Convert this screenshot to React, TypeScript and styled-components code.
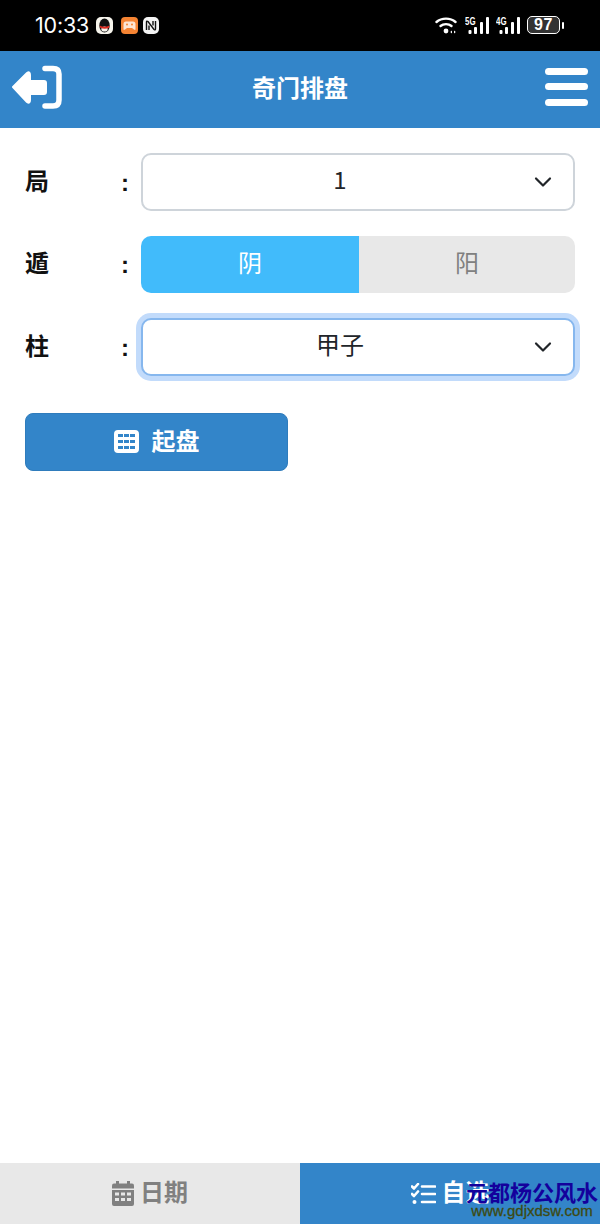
import React from "react"
import styled, { createGlobalStyle } from "styled-components"

const CJK = `"Noto Sans CJK SC", "Noto Sans", sans-serif`

const Global = createGlobalStyle`
    html, body {
        margin: 0;
        padding: 0;
        background: #fff;
    }
    * {
        box-sizing: border-box;
    }
`

const Page = styled.div`
    width: 600px;
    height: 1224px;
    display: flex;
    flex-direction: column;
    position: relative;
    overflow: hidden;
    font-family: ${CJK};
    background: #fff;
`

const StatusBar = styled.div`
    height: 51px;
    flex: none;
    background: #000;
    color: #fff;
    display: flex;
    align-items: center;
    justify-content: space-between;
    padding: 0 36px 1px 35px;
`

const StatusLeft = styled.div`
    display: flex;
    align-items: center;
    gap: 5px;
`

const StatusRight = styled.div`
    display: flex;
    align-items: center;
    gap: 7px;
`

const Clock = styled.span`
    font-family: "Inter", "Liberation Sans", sans-serif;
    font-size: 21.5px;
    line-height: 26px;
    margin-right: 2px;
    letter-spacing: -0.2px;
`

const Battery = styled.div`
    width: 33px;
    height: 18px;
    border: 1.5px solid #fff;
    border-radius: 5px;
    background: #333;
    color: #fff;
    font: 700 16px/15px "Liberation Sans", sans-serif;
    letter-spacing: 0.5px;
    text-align: center;
`

const BatteryTip = styled.div`
    width: 2px;
    height: 7px;
    margin-left: -5px;
    background: #fff;
    border-radius: 1px;
`

const Header = styled.header`
    height: 77px;
    flex: none;
    background: #3385c9;
    display: grid;
    grid-template-columns: 1fr auto 1fr;
    align-items: center;
    padding: 0 12px 5px;
`

const Title = styled.h1`
    margin: 0 0 1px;
    color: #fff;
    font-size: 24px;
    font-weight: 700;
    line-height: 32px;
`

const BackIcon = styled.svg`
    display: block;
`

const MenuIcon = styled.svg`
    display: block;
    justify-self: end;
`

const Form = styled.main`
    flex: 1;
    padding: 25px 25px 0;
    display: flex;
    flex-direction: column;
    gap: 25px;
`

const Row = styled.div`
    display: grid;
    grid-template-columns: 116px 434px;
    height: 57.5px;
    align-items: center;
`

const Label = styled.div`
    display: flex;
    justify-content: space-between;
    width: 104px;
    margin-bottom: 4px;
    font-size: 24px;
    font-weight: 700;
    line-height: 32px;
    color: #111;
`

const Colon = styled.span`
    font-family: "Liberation Sans", sans-serif;
    position: relative;
    top: 3px;
`

const Select = styled.div<{ $focused?: boolean }>`
    height: 57.5px;
    border-radius: 10px;
    background: #fff;
    border: 2px solid ${p => (p.$focused ? "#86b7ee" : "#ced4da")};
    box-shadow: ${p => (p.$focused ? "0 0 0 5px #c2dbfb" : "none")};
    display: flex;
    align-items: center;
    justify-content: center;
    position: relative;
    font-size: 24px;
    line-height: 32px;
    color: #212529;
    padding: 0 36px 6px 0;
`

const Chevron = styled.svg`
    position: absolute;
    right: 21px;
    top: 50%;
    transform: translateY(-50%);
`

const Toggle = styled.div`
    display: grid;
    grid-template-columns: 218px 216px;
    height: 57.5px;
    border-radius: 10px;
    overflow: hidden;
`

const ToggleItem = styled.div<{ $active?: boolean }>`
    display: flex;
    align-items: center;
    justify-content: center;
    padding-bottom: 5px;
    font-size: 24px;
    line-height: 32px;
    background: ${p => (p.$active ? "#41bbfb" : "#e8e8e8")};
    color: ${p => (p.$active ? "#fff" : "#808080")};
`

const Submit = styled.button`
    width: 263px;
    height: 57.5px;
    margin-top: 12.5px;
    border: 1px solid #2f7cbc;
    border-radius: 8px;
    background: #3385c9;
    color: #fff;
    font-family: ${CJK};
    font-size: 24px;
    font-weight: 700;
    display: flex;
    align-items: center;
    justify-content: center;
    gap: 13px;
    padding: 0;
`

const SubmitLabel = styled.span`
    margin-bottom: 5px;
`

const Tabs = styled.nav`
    height: 61px;
    flex: none;
    display: grid;
    grid-template-columns: 300px 300px;
`

const Tab = styled.div<{ $active?: boolean }>`
    display: flex;
    align-items: center;
    justify-content: center;
    gap: 6px;
    font-size: 24px;
    font-weight: 700;
    background: ${p => (p.$active ? "#3385c9" : "#e8e8e8")};
    color: ${p => (p.$active ? "#fff" : "#808080")};
`

const TabLabel = styled.span`
    margin-bottom: 6px;
`

const Watermark = styled.div`
    position: absolute;
    left: 466px;
    top: 1178px;
    width: 132px;
    text-align: center;
`

const WatermarkTitle = styled.div`
    font-family: "Noto Sans CJK SC", serif;
    font-size: 22px;
    line-height: 27px;
    font-weight: 700;
    white-space: nowrap;
    color: #14009c;
`

const WatermarkUrl = styled.div`
    font-family: "Liberation Sans", sans-serif;
    font-size: 15px;
    line-height: 12px;
    white-space: nowrap;
    color: #3e4a10;
    -webkit-text-stroke: 0.3px #3e4a10;
`

const Wifi = () => (
    <svg width="23" height="17" viewBox="0 0 23 17" fill="none" stroke="#fff" strokeWidth="2.4" strokeLinecap="round">
        <path d="M1.500 5 C6.500 0.500 15.500 0.500 20.500 5" />
        <path d="M5.500 9 C8.500 6.500 13.500 6.500 16.500 9" />
        <circle cx="11" cy="14" r="2.400" fill="#fff" stroke="none" />
        <path d="M17 13.500 L15.200 15 L17 16.500 Z M19 13.500 L20.800 15 L19 16.500 Z" fill="#fff" stroke="none" />
    </svg>
)

const Signal = ({ label }: { label: string }) => (
    <svg width="24" height="17" viewBox="0 0 24 17" fill="#fff">
        <text x="0" y="7.500" fontSize="10" fontWeight="700" textLength="10.500" lengthAdjust="spacingAndGlyphs" fontFamily="Liberation Sans, sans-serif">{label}</text>
        <rect x="3.500" y="13" width="3" height="4" rx="1" />
        <rect x="9" y="10" width="3" height="7" rx="1" />
        <rect x="15" y="5" width="3" height="12" rx="1" />
        <rect x="21" y="0" width="3" height="17" rx="1" />
    </svg>
)

const SelectArrow = () => (
    <Chevron width="18" height="12" viewBox="0 0 18 12" fill="none" stroke="#212529" strokeWidth="2.200" strokeLinecap="round" strokeLinejoin="round">
        <path d="M2 2.500 L9 9.500 L16 2.500" />
    </Chevron>
)

const App = () => (
    <Page>
        <Global />
        <StatusBar>
            <StatusLeft>
                <Clock>10:33</Clock>
                <svg width="17" height="17" viewBox="0 0 17 17">
                    <rect width="17" height="17" rx="5" fill="#f6f4ec" />
                    <ellipse cx="8.500" cy="8.500" rx="5.200" ry="7" fill="#111" />
                    <ellipse cx="8.500" cy="12" rx="3.200" ry="2.600" fill="#f6f4ec" />
                    <path d="M3.500 8.500 Q8.500 11 13.500 8.500 L13 11 Q8.500 12.500 4.500 11 Z" fill="#e02a20" />
                </svg>
                <svg width="17" height="17" viewBox="0 0 17 17" style={{ marginLeft: 3 }}>
                    <rect width="17" height="17" rx="4" fill="#f58433" />
                    <path d="M2.500 12 V7 Q2.500 4.500 5 4.500 H12 Q14.500 4.500 14.500 7 V12 Q14.500 13.500 13 12.500 L11 11 H6 L4 12.500 Q2.500 13.500 2.500 12 Z" fill="#fde6d3" />
                    <circle cx="6" cy="7.500" r="1" fill="#f58433" />
                    <circle cx="11" cy="7.500" r="1" fill="#f58433" />
                </svg>
                <svg width="16" height="17" viewBox="0 0 16 17">
                    <rect width="16" height="17" rx="5" fill="#f4f4f4" />
                    <path d="M3.500 13 V5 Q3.500 3.500 5 4.500 L11 12.500 Q12.500 13.500 12.500 12 V4" fill="none" stroke="#111" strokeWidth="1.400" />
                    <path d="M6 13 V8.500 M10 4 V8.500" fill="none" stroke="#111" strokeWidth="1.400" />
                </svg>
            </StatusLeft>
            <StatusRight>
                <Wifi />
                <Signal label="5G" />
                <Signal label="4G" />
                <Battery>97</Battery>
                <BatteryTip />
            </StatusRight>
        </StatusBar>
        <Header>
            <BackIcon width="50" height="44" viewBox="0 0 50 44">
                <path d="M1 22 L15 8 Q18 6 18 10 V16 H32 Q34 16 34 18 V27 Q34 29 32 29 H18 V35 Q18 39 15 37 Z" fill="#fff" stroke="#fff" strokeWidth="2" strokeLinejoin="round" />
                <path d="M33 3.500 H41 Q47 3.500 47 9 V35 Q47 41 41 41 H33" fill="none" stroke="#fff" strokeWidth="5.500" strokeLinecap="round" />
            </BackIcon>
            <Title>奇门排盘</Title>
            <MenuIcon width="43" height="38" viewBox="0 0 43 38" fill="#fff">
                <rect x="0" y="0" width="43" height="7" rx="3.500" />
                <rect x="0" y="15" width="43" height="7" rx="3.500" />
                <rect x="0" y="31" width="43" height="7" rx="3.500" />
            </MenuIcon>
        </Header>
        <Form>
            <Row>
                <Label>局<Colon>:</Colon></Label>
                <Select>
                    1
                    <SelectArrow />
                </Select>
            </Row>
            <Row>
                <Label>遁<Colon>:</Colon></Label>
                <Toggle>
                    <ToggleItem $active>阴</ToggleItem>
                    <ToggleItem>阳</ToggleItem>
                </Toggle>
            </Row>
            <Row>
                <Label>柱<Colon>:</Colon></Label>
                <Select $focused>
                    甲子
                    <SelectArrow />
                </Select>
            </Row>
            <Submit>
                <svg width="25" height="23" viewBox="0 0 25 23">
                    <path fill="#fff" fillRule="evenodd" d="M4 0 H21 Q25 0 25 4 V19 Q25 23 21 23 H4 Q0 23 0 19 V4 Q0 0 4 0 Z M4 4 V7 H9 V4 Z M10 4 V7 H15 V4 Z M16 4 V7 H21 V4 Z M4 10 V13 H9 V10 Z M10 10 V13 H15 V10 Z M16 10 V13 H21 V10 Z M4 16 V19 H9 V16 Z M10 16 V19 H15 V16 Z M16 16 V19 H21 V16 Z" />
                </svg>
                <SubmitLabel>起盘</SubmitLabel>
            </Submit>
        </Form>
        <Tabs>
            <Tab>
                <svg width="22" height="25" viewBox="0 0 22 25" fill="#808080">
                    <rect x="4" y="0" width="3" height="4" />
                    <rect x="15" y="0" width="3" height="4" />
                    <path d="M2 2.500 H20 Q22 2.500 22 4.500 V7.500 H0 V4.500 Q0 2.500 2 2.500 Z" />
                    <path fillRule="evenodd" d="M0 9 H22 V23 Q22 25 20 25 H2 Q0 25 0 23 Z M3 11.500 V14.500 H7 V11.500 Z M9 11.500 V14.500 H13 V11.500 Z M15 11.500 V14.500 H19 V11.500 Z M3 17 V20 H7 V17 Z M9 17 V20 H13 V17 Z M15 17 V20 H19 V17 Z" />
                </svg>
                <TabLabel>日期</TabLabel>
            </Tab>
            <Tab $active>
                <svg width="25" height="22" viewBox="0 0 25 22" fill="none" stroke="#fff" strokeWidth="2.600" strokeLinecap="round" strokeLinejoin="round">
                    <path d="M1 3.500 L3 5.500 L7 1" />
                    <path d="M1 11 L3 13 L7 8.500" />
                    <circle cx="3.500" cy="19" r="2" fill="#fff" stroke="none" />
                    <path d="M11 3.500 H24 M11 11 H24 M11 19 H24" />
                </svg>
                <TabLabel>自选</TabLabel>
            </Tab>
        </Tabs>
        <Watermark>
            <WatermarkTitle>元都杨公风水</WatermarkTitle>
            <WatermarkUrl>www.gdjxdsw.com</WatermarkUrl>
        </Watermark>
    </Page>
)

export default App
